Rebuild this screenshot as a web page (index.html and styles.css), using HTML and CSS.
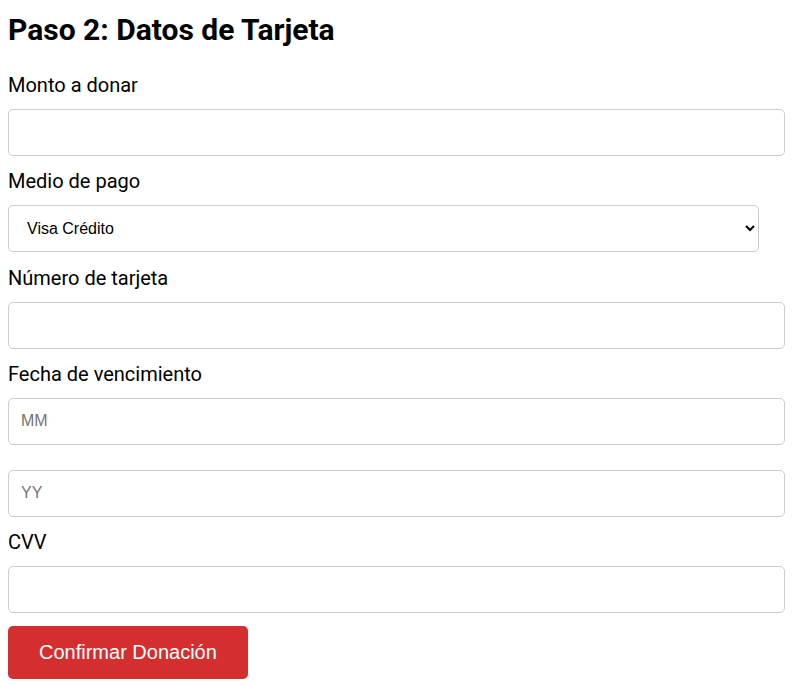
FILE: index.html
```html
<!DOCTYPE html>
<html lang="es">
<head>
  <meta charset="UTF-8">
  <title>Paso 2: Datos de Tarjeta</title>
  <link rel="stylesheet" href="styles.css">
</head>
<body>
  <h2>Paso 2: Datos de Tarjeta</h2>
  <form id="card-form">
    <label for="monto">Monto a donar</label>
    <input type="text" id="monto" class="field">

    <label for="medio">Medio de pago</label>
    <select id="medio" class="field select-field">
      <option>Visa Crédito</option>
      <option>Visa Débito</option>
      <option>Mastercard</option>
    </select>

    <label for="numero">Número de tarjeta</label>
    <input type="text" id="numero" class="field">

    <label for="mes">Fecha de vencimiento</label>
    <input type="text" id="mes" class="field" placeholder="MM">
    <input type="text" id="anio" class="field field-second" placeholder="YY">

    <label for="cvv">CVV</label>
    <input type="text" id="cvv" class="field">

    <button type="button" class="btn" id="confirm-btn">Confirmar Donación</button>
  </form>
</body>
</html>
```

FILE: styles.css
```css
body { margin: 8px; background: #fff; color: #000; font-family: Roboto, "Liberation Sans", sans-serif; }
h2 { font-size: 30px; font-weight: 700; margin: 4px 0 27px 0; }
#card-form { display: flex; flex-direction: column; align-items: stretch; }
label { font-size: 20px; line-height: 23px; margin-bottom: 12px; }
.field { box-sizing: border-box; width: 100%; height: 47px; margin: 0 0 14.3px 0; padding: 0 12px; font-family: "Liberation Sans", Arial, sans-serif; font-size: 16px; color: #000; background: #fff; border: 1px solid #ccc; border-radius: 5px; }
.field-second { margin-top: 10.7px; }
.select-field { width: 751px; padding-left: 14px; }
.btn { align-self: flex-start; margin-top: -1px; padding: 15px 31px; font-family: "Liberation Sans", Arial, sans-serif; font-size: 20px; color: #fff; background: #d32f2f; border: none; border-radius: 5px; cursor: pointer; }
.btn:hover { background: #b71c1c; }
```
